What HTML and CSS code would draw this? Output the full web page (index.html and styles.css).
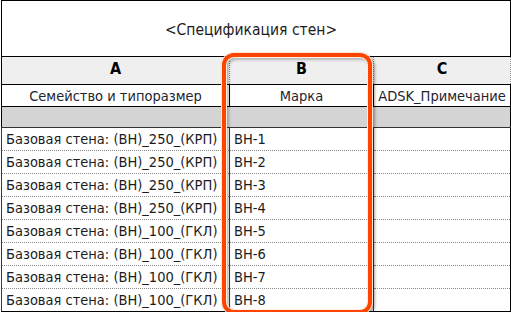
FILE: index.html
```html
<!DOCTYPE html>
<html lang="ru">
<head>
    <meta charset="UTF-8">
    <meta name="viewport" content="width=device-width, initial-scale=1.0">
    <title>Спецификация стен</title>
    <link rel="stylesheet" href="styles.css">
</head>
<body>
    <div class="sheet">
        <table class="schedule">
            <colgroup>
                <col class="col-a">
                <col class="col-b">
                <col class="col-c">
            </colgroup>
            <thead>
                <tr class="title-row">
                    <th colspan="3">&lt;Спецификация стен&gt;</th>
                </tr>
                <tr class="letters-row">
                    <th>A</th>
                    <th>B</th>
                    <th>C</th>
                </tr>
                <tr class="names-row">
                    <th>Семейство и типоразмер</th>
                    <th>Марка</th>
                    <th>ADSK_Примечание</th>
                </tr>
                <tr class="group-row">
                    <td colspan="3"></td>
                </tr>
            </thead>
            <tbody>
                <tr><td>Базовая стена: (ВН)_250_(КРП)</td><td>ВН-1</td><td></td></tr>
                <tr><td>Базовая стена: (ВН)_250_(КРП)</td><td>ВН-2</td><td></td></tr>
                <tr><td>Базовая стена: (ВН)_250_(КРП)</td><td>ВН-3</td><td></td></tr>
                <tr><td>Базовая стена: (ВН)_250_(КРП)</td><td>ВН-4</td><td></td></tr>
                <tr><td>Базовая стена: (ВН)_100_(ГКЛ)</td><td>ВН-5</td><td></td></tr>
                <tr><td>Базовая стена: (ВН)_100_(ГКЛ)</td><td>ВН-6</td><td></td></tr>
                <tr><td>Базовая стена: (ВН)_100_(ГКЛ)</td><td>ВН-7</td><td></td></tr>
                <tr><td>Базовая стена: (ВН)_100_(ГКЛ)</td><td>ВН-8</td><td></td></tr>
            </tbody>
        </table>
        <!-- выделение столбца "Марка" -->
        <div class="highlight"></div>
    </div>
</body>
</html>
```

FILE: styles.css
```css
body {
    margin: 0;
    padding: 0;
    background-color: #ffffff;
    font-family: "DejaVu Sans Condensed", "DejaVu Sans", sans-serif;
    color: #1c1c1c;
}

.sheet {
    position: relative;
    width: 509px;
    padding-left: 1px;
}

.schedule {
    width: 509px;
    border-collapse: collapse;
    table-layout: fixed;
    font-size: 14.5px;
}

.col-a {
    width: 228px;
}

.col-b {
    width: 144px;
}

.col-c {
    width: 137px;
}

.schedule th,
.schedule td {
    padding: 0 4px;
    white-space: nowrap;
    overflow: hidden;
}

.title-row th {
    height: 53px;
    border: 1px solid #000000;
    font-weight: normal;
    font-size: 15.5px;
    padding: 2px 10px 0 0;
}

.letters-row th {
    height: 23px;
    background-color: #efefef;
    font-weight: bold;
    font-size: 16px;
    color: #000000;
    padding-bottom: 4px;
    border-top: 1px dotted #8a8a8a;
    border-right: 1px dotted #8a8a8a;
    border-bottom: 1px solid #000000;
}

.letters-row th:first-child {
    border-left: 1px solid #000000;
}

.names-row th {
    height: 21px;
    font-weight: normal;
    border: 1px solid #000000;
    color: #1e2430;
}

.group-row td {
    height: 20px;
    background-color: #d4d4d4;
    border-left: 1px solid #000000;
    border-right: 1px solid #000000;
    border-bottom: 1px solid #333333;
}

tbody td {
    height: 22px;
    border-bottom: 1px dotted #8a8a8a;
    border-left: 1px solid #3a3a3a;
}

tbody td:last-child {
    border-right: 1px solid #000000;
}

tbody tr:last-child td {
    border-bottom: 1px solid #000000;
}

.highlight {
    position: absolute;
    left: 222px;
    top: 53px;
    width: 142px;
    height: 253px;
    border: 4px solid #ff4400;
    border-radius: 12px;
    box-shadow: 0 0 0 1px #ffe6d6, 2px 2px 3px 1px rgba(0, 0, 0, 0.35), inset 0 0 0 1px #fff0e4, inset 2px 2px 3px 1px rgba(0, 0, 0, 0.25);
}
```
